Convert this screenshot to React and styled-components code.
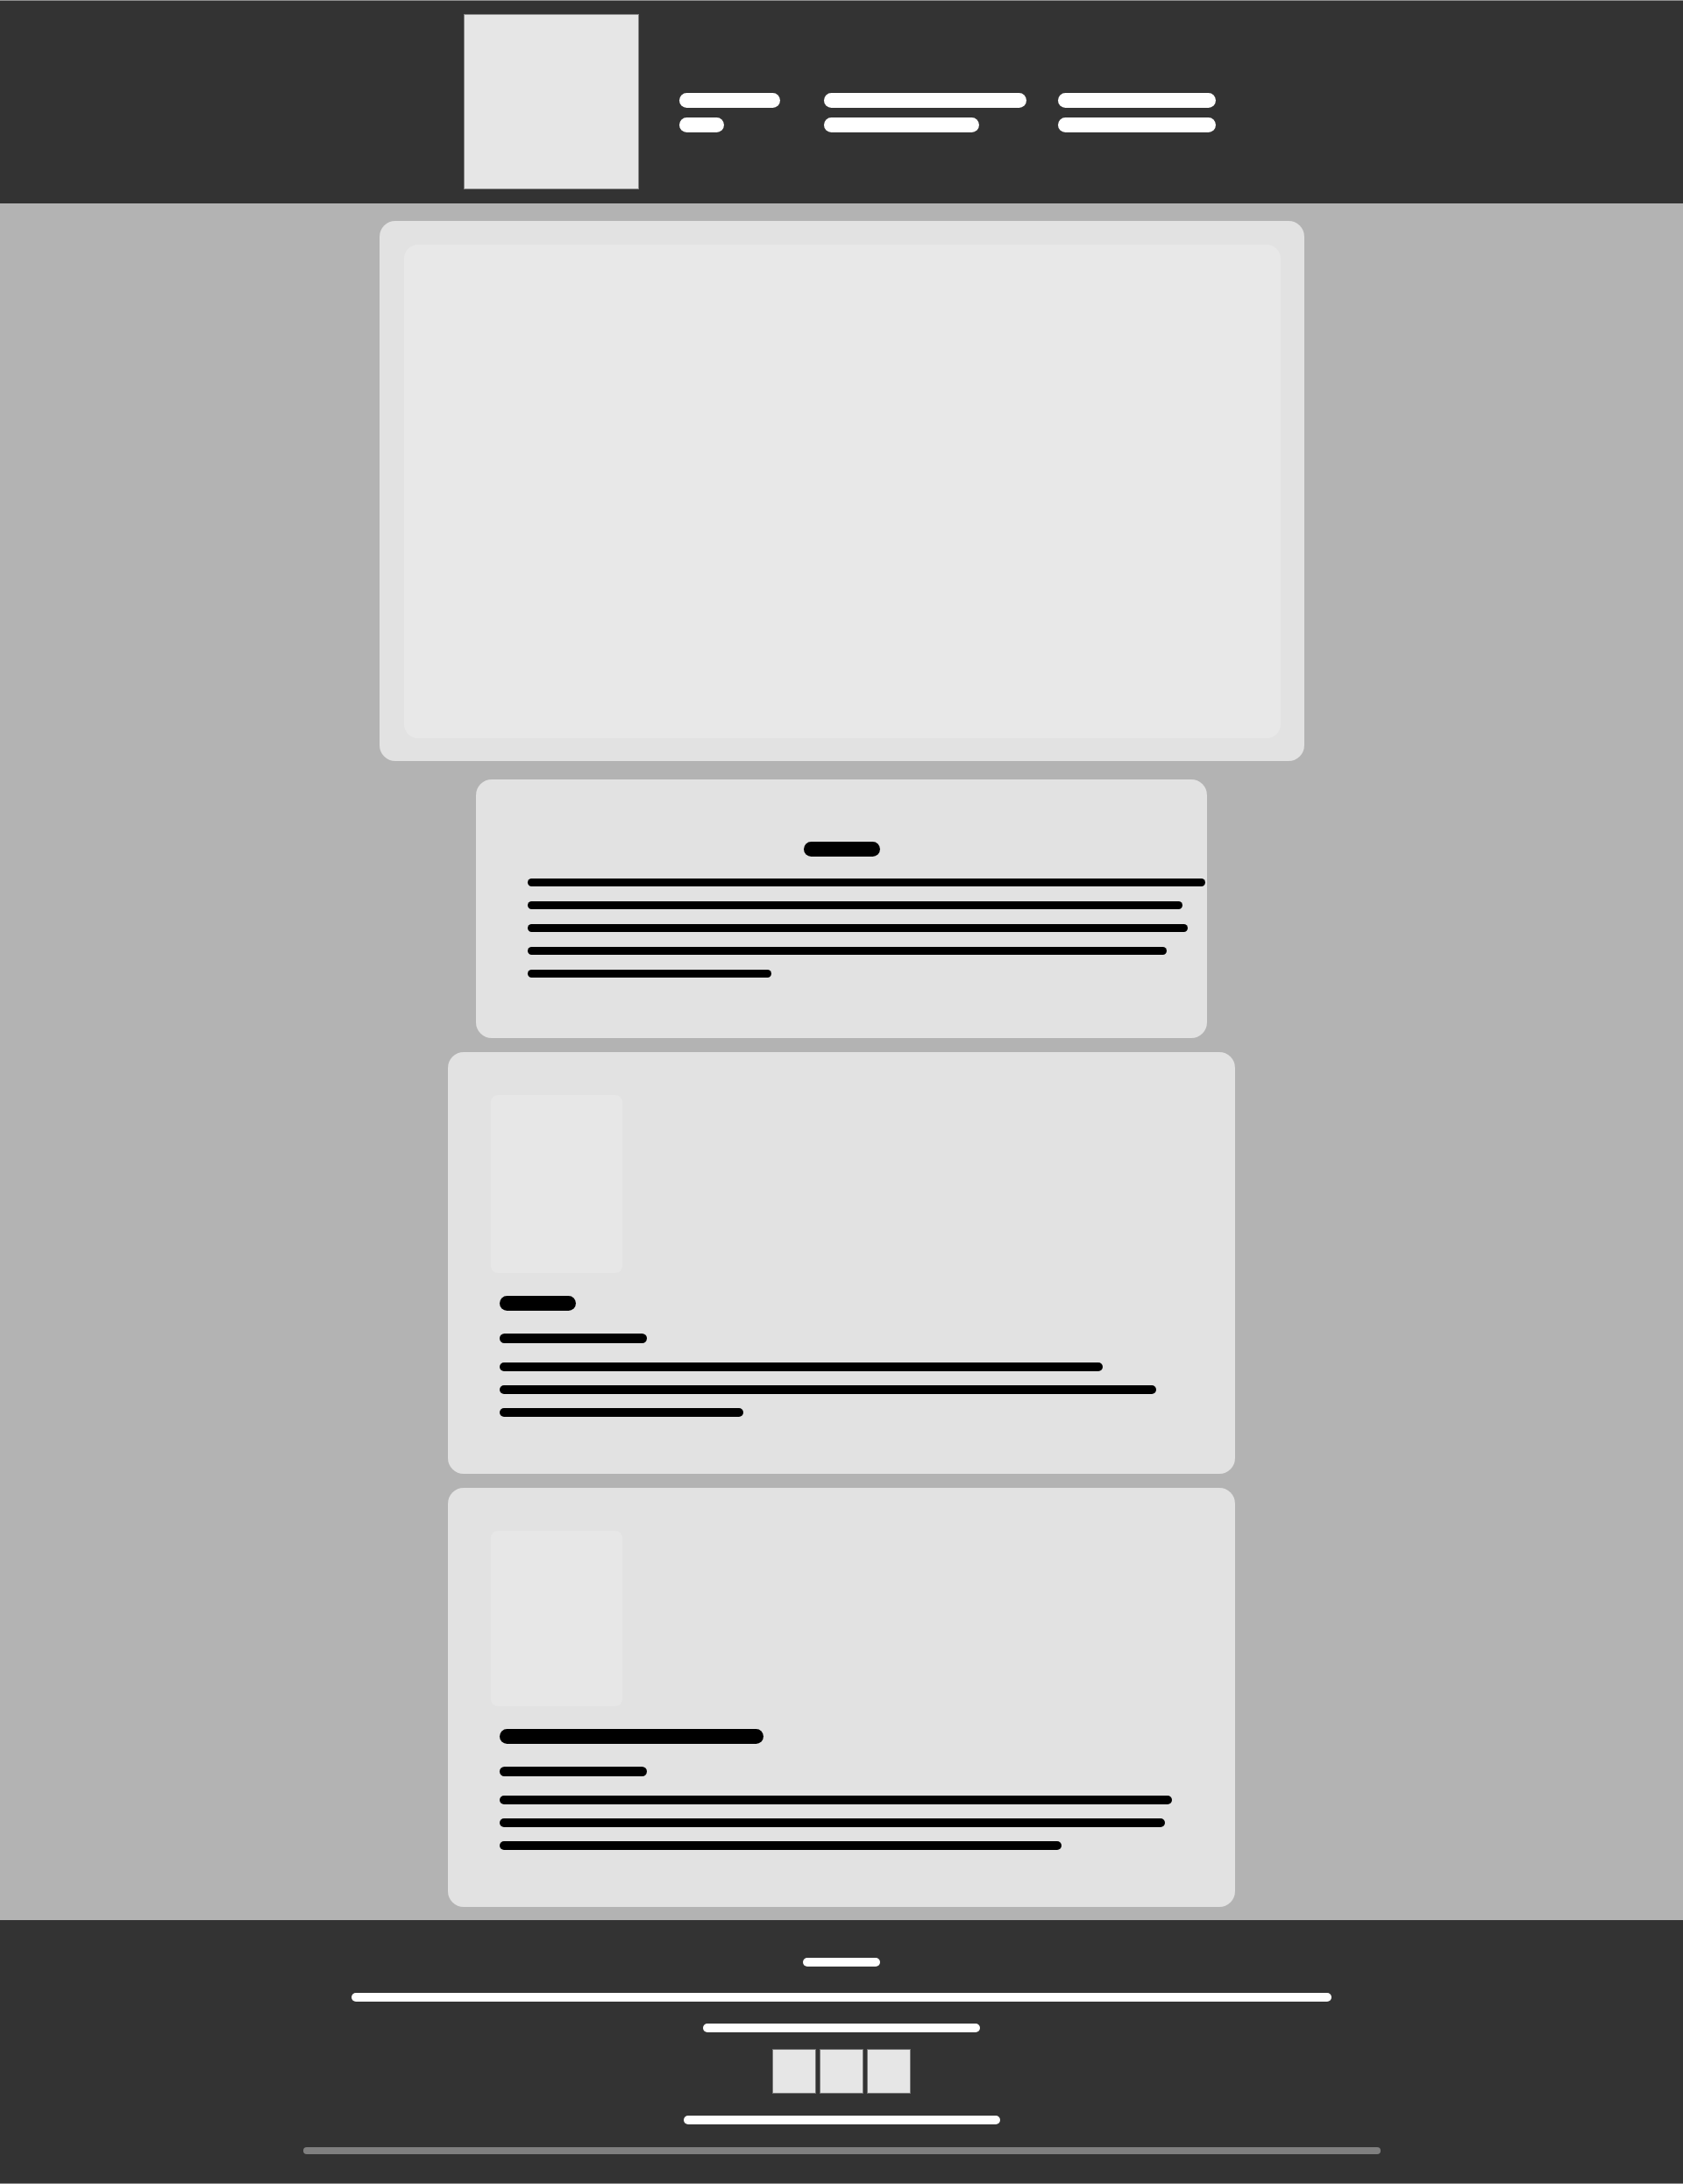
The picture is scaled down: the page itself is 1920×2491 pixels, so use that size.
import React from 'react'
import styled, { createGlobalStyle } from 'styled-components'

const GlobalStyle = createGlobalStyle`
    body {
        margin: 0;
        background: #b3b3b3;
        font-family: "Liberation Sans", Arial, sans-serif;
    }
`

const navColumns = [
    { ml: 46, bars: [115, 51] },
    { ml: 50, bars: [231, 177] },
    { ml: 36, bars: [180, 180] },
]

const aboutLines = [773, 747, 753, 729, 278]

const projects = [
    { thumb: 203, title: 87, lines: [688, 749, 278] },
    { thumb: 200, title: 301, lines: [767, 759, 641] },
]

const App = () => {
    return (
        <>
            <GlobalStyle />
            <Header>
                <Logo />
                <Nav>
                    {navColumns.map((col, i) => (
                        <NavItem key={i} $ml={col.ml}>
                            {col.bars.map((w, j) => <Bar key={j} $w={w} $h={17} $color="#fff" />)}
                        </NavItem>
                    ))}
                </Nav>
            </Header>

            <Main>
                <Hero>
                    <VideoFrame />
                </Hero>

                <AboutCard>
                    <AboutTitle $w={87} $h={17} />
                    <TextLines $gap={17}>
                        {aboutLines.map((w, i) => <Bar key={i} $w={w} $h={9} />)}
                    </TextLines>
                </AboutCard>

                {projects.map((p, i) => (
                    <ProjectCard key={i}>
                        <Thumb $h={p.thumb} />
                        <ProjectBody>
                            <Bar $w={p.title} $h={17} />
                            <Subtitle $w={168} $h={11} />
                            <TextLines $gap={16} $mt={22}>
                                {p.lines.map((w, j) => <Bar key={j} $w={w} $h={10} />)}
                            </TextLines>
                        </ProjectBody>
                    </ProjectCard>
                ))}
            </Main>

            <Footer>
                <Bar $w={88} $h={10} $color="#fff" />
                <FooterBar $w={1118} $h={10} $color="#fff" $mt={30} />
                <FooterBar $w={316} $h={10} $color="#fff" $mt={25} />
                <Socials>
                    <SocialBox />
                    <SocialBox />
                    <SocialBox />
                </Socials>
                <FooterBar $w={361} $h={10} $color="#fff" $mt={25} />
                <FooterBar $w={1229} $h={8} $color="#808080" $mt={26} />
            </Footer>
        </>
    )
}

export default App

const Bar = styled.span`
    display: block;
    width: ${p => p.$w}px;
    height: ${p => p.$h}px;
    background: ${p => p.$color || '#000'};
    border-radius: 999px;
    flex-shrink: 0;
`

const Header = styled.header`
    box-sizing: border-box;
    height: 232px;
    background: #333333;
    border-top: 1px solid #8f8f8f;
    padding: 15px 4px 0 0;
    display: flex;
    justify-content: center;
    align-items: flex-start;
`

const Logo = styled.div`
    box-sizing: border-box;
    width: 200px;
    height: 200px;
    background: #e6e6e6;
    border: 1px solid #8a8a8a;
`

const Nav = styled.nav`
    display: flex;
    margin-top: 90px;
`

const NavItem = styled.div`
    display: flex;
    flex-direction: column;
    gap: 11px;
    margin-left: ${p => p.$ml}px;
`

const Main = styled.main`
    display: flex;
    flex-direction: column;
    align-items: center;
    padding: 20px 0 15px;
`

const Hero = styled.section`
    box-sizing: border-box;
    width: 1055px;
    padding: 27px 27px 26px 28px;
    background: #e2e2e2;
    border-radius: 18px;
`

const VideoFrame = styled.div`
    width: 1000px;
    height: 563px;
    background: #e8e8e8;
    border-radius: 16px;
`

const AboutCard = styled.section`
    box-sizing: border-box;
    width: 834px;
    margin-top: 21px;
    padding: 71px 0 69px;
    background: #e2e2e2;
    border-radius: 18px;
`

const AboutTitle = styled(Bar)`
    margin: 0 auto 25px;
`

const TextLines = styled.div`
    display: flex;
    flex-direction: column;
    gap: ${p => p.$gap}px;
    margin-top: ${p => p.$mt || 0}px;
    padding-left: ${p => (p.$mt ? 0 : 59)}px;
`

const ProjectCard = styled.article`
    box-sizing: border-box;
    width: 898px;
    margin-top: 16px;
    padding: 49px 49px 65px;
    background: #e2e2e2;
    border-radius: 18px;
`

const Thumb = styled.div`
    width: 150px;
    height: ${p => p.$h}px;
    background: #e7e7e7;
    border-radius: 8px;
`

const ProjectBody = styled.div`
    margin: 26px 0 0 10px;
`

const Subtitle = styled(Bar)`
    margin-top: 26px;
`

const Footer = styled.footer`
    background: #333333;
    border-bottom: 1px solid #8f8f8f;
    display: flex;
    flex-direction: column;
    align-items: center;
    padding: 43px 0 33px;
`

const FooterBar = styled(Bar)`
    margin-top: ${p => p.$mt}px;
`

const Socials = styled.div`
    display: flex;
    gap: 4px;
    margin-top: 19px;
`

const SocialBox = styled.div`
    box-sizing: border-box;
    width: 50px;
    height: 51px;
    background: #e6e6e6;
    border: 1px solid #777;
`
